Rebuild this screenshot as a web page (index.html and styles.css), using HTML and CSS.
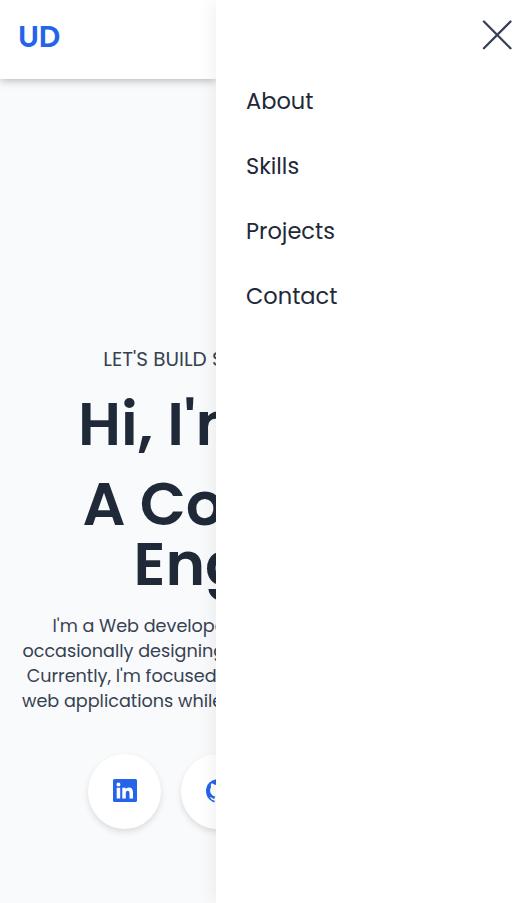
FILE: index.html
```html
<!DOCTYPE html>
<html lang="en">
<head>
<meta charset="utf-8">
<meta name="viewport" content="width=device-width, initial-scale=1">
<title>UD</title>
<link rel="stylesheet" href="styles.css">
</head>
<body>
<div class="page">
  <header class="header"><a class="logo">UD</a></header>
  <main class="hero">
    <p class="tagline">LET'S BUILD S</p>
    <h1 class="greeting">Hi, I'm</h1>
    <h2 class="role"><span class="role-a">A Co</span><span class="role-b">Eng</span></h2>
    <p class="intro"><span class="l1">I'm a Web develope</span><span class="l2">occasionally designing</span><span class="l3">Currently, I'm focused</span><span class="l4">web applications while</span></p>
    <div class="social">
      <a class="circle"><svg class="icon" viewBox="0 0 24 24"><path fill-rule="evenodd" d="M1.600 0H22.400A1.600 1.600 0 0 1 24 1.600V21.400A1.600 1.600 0 0 1 22.400 23H1.600A1.600 1.600 0 0 1 0 21.400V1.600A1.600 1.600 0 0 1 1.600 0ZM3.700 8.800V19.500H7.200V8.800ZM5.450 3.500a2 2 0 1 0 0 4a2 2 0 1 0 0-4ZM9.300 8.800V19.500H12.800V14.200C12.800 12.600 13.300 11.700 14.700 11.700C16 11.700 16.500 12.700 16.500 14.200V19.500H20V13.600C20 10.400 18.700 8.500 15.900 8.500C14.400 8.500 13.300 9.300 12.700 10.300V8.800Z"/></svg></a>
      <a class="circle"><svg class="icon" viewBox="0 0 24 24"><circle cx="12" cy="12" r="12"/><path class="cat" d="M5.200 4.500C6.600 4.300 8 5 9.200 6C11 5.600 13 5.600 14.800 6C16 5 17.400 4.300 18.800 4.500C19.300 6 19.300 7.200 18.900 8.300C20.300 10 20.300 12.700 19 14.700C18 16.300 16.400 17.200 14.600 17.600C15.300 18.500 15.400 19.500 15.400 20.500V24H8.600V21.400C5.600 21.800 5.400 19.300 3.500 18.300C5.900 17.600 6.500 20.300 8.700 19.500C8.700 18.700 8.900 18.100 9.400 17.600C7.600 17.200 6 16.300 5 14.700C3.700 12.700 3.700 10 5.100 8.300C4.700 7.200 4.700 6 5.200 4.500Z"/></svg></a>
    </div>
  </main>
</div>
<aside class="drawer">
  <div class="close"><svg class="x" viewBox="0 0 30 30"><path d="M1.900 1.500L28.500 28.300M28.500 1.500L1.900 28.300"/></svg></div>
  <nav class="menu"><a>About</a><a>Skills</a><a>Projects</a><a>Contact</a></nav>
</aside>
</body>
</html>
```
FILE: styles.css
```css
* { box-sizing: border-box; margin: 0; padding: 0; }
body { height: 903px; overflow: hidden; display: grid; grid-template-columns: 216px 316px; font-family: Poppins, Inter, sans-serif; background: #f9fafb; color: #1f2937; }
.page { height: 903px; overflow: hidden; white-space: nowrap; background: #f9fafc; }
.header { height: 79px; padding: 14px 18px; background: #fff; box-shadow: 0 2px 8px rgba(0,0,0,.25); position: relative; }
.logo { display: block; font-size: 30px; line-height: 45px; font-weight: 600; color: #2563eb; letter-spacing: -.2px; }
.hero { padding-top: 265px; }
.tagline { padding-left: 103.300px; font-size: 20px; line-height: 30px; color: #374151; }
.greeting { padding-left: 78px; margin-top: 20px; font-size: 60px; line-height: 60px; font-weight: 600; }
.role { margin-top: 20px; font-size: 60px; line-height: 60px; font-weight: 600; }
.role span, .intro span { display: block; }
.role-a { padding-left: 82.500px; }
.role-b { padding-left: 133.500px; }
.intro { margin-top: 20px; font-size: 17.600px; line-height: 25px; color: #374151; }
.l1 { padding-left: 52.500px; }
.l2 { padding-left: 22.500px; }
.l3 { padding-left: 26.700px; }
.l4 { padding-left: 22px; }
.social { display: flex; gap: 20px; padding-left: 88px; margin-top: 40px; }
.circle { flex: none; display: flex; align-items: center; justify-content: center; width: 73px; height: 75px; padding-bottom: 2px; border-radius: 50%; background: #fff; box-shadow: 0 3px 6px rgba(0,0,0,.12); }
.icon { width: 24px; height: 24px; fill: #2563eb; }
.cat { fill: #fff; }
.drawer { position: relative; z-index: 2; height: 903px; padding: 20px 20px 0 30px; background: #fff; box-shadow: 0 0 20px rgba(0,0,0,.08); }
.close { display: flex; justify-content: flex-end; height: 30px; }
.x { width: 30px; height: 30px; fill: none; stroke: #374056; stroke-width: 2.300; stroke-linecap: round; }
.menu { display: flex; flex-direction: column; gap: 35px; margin-top: 36px; font-size: 22.500px; line-height: 30px; }
```
